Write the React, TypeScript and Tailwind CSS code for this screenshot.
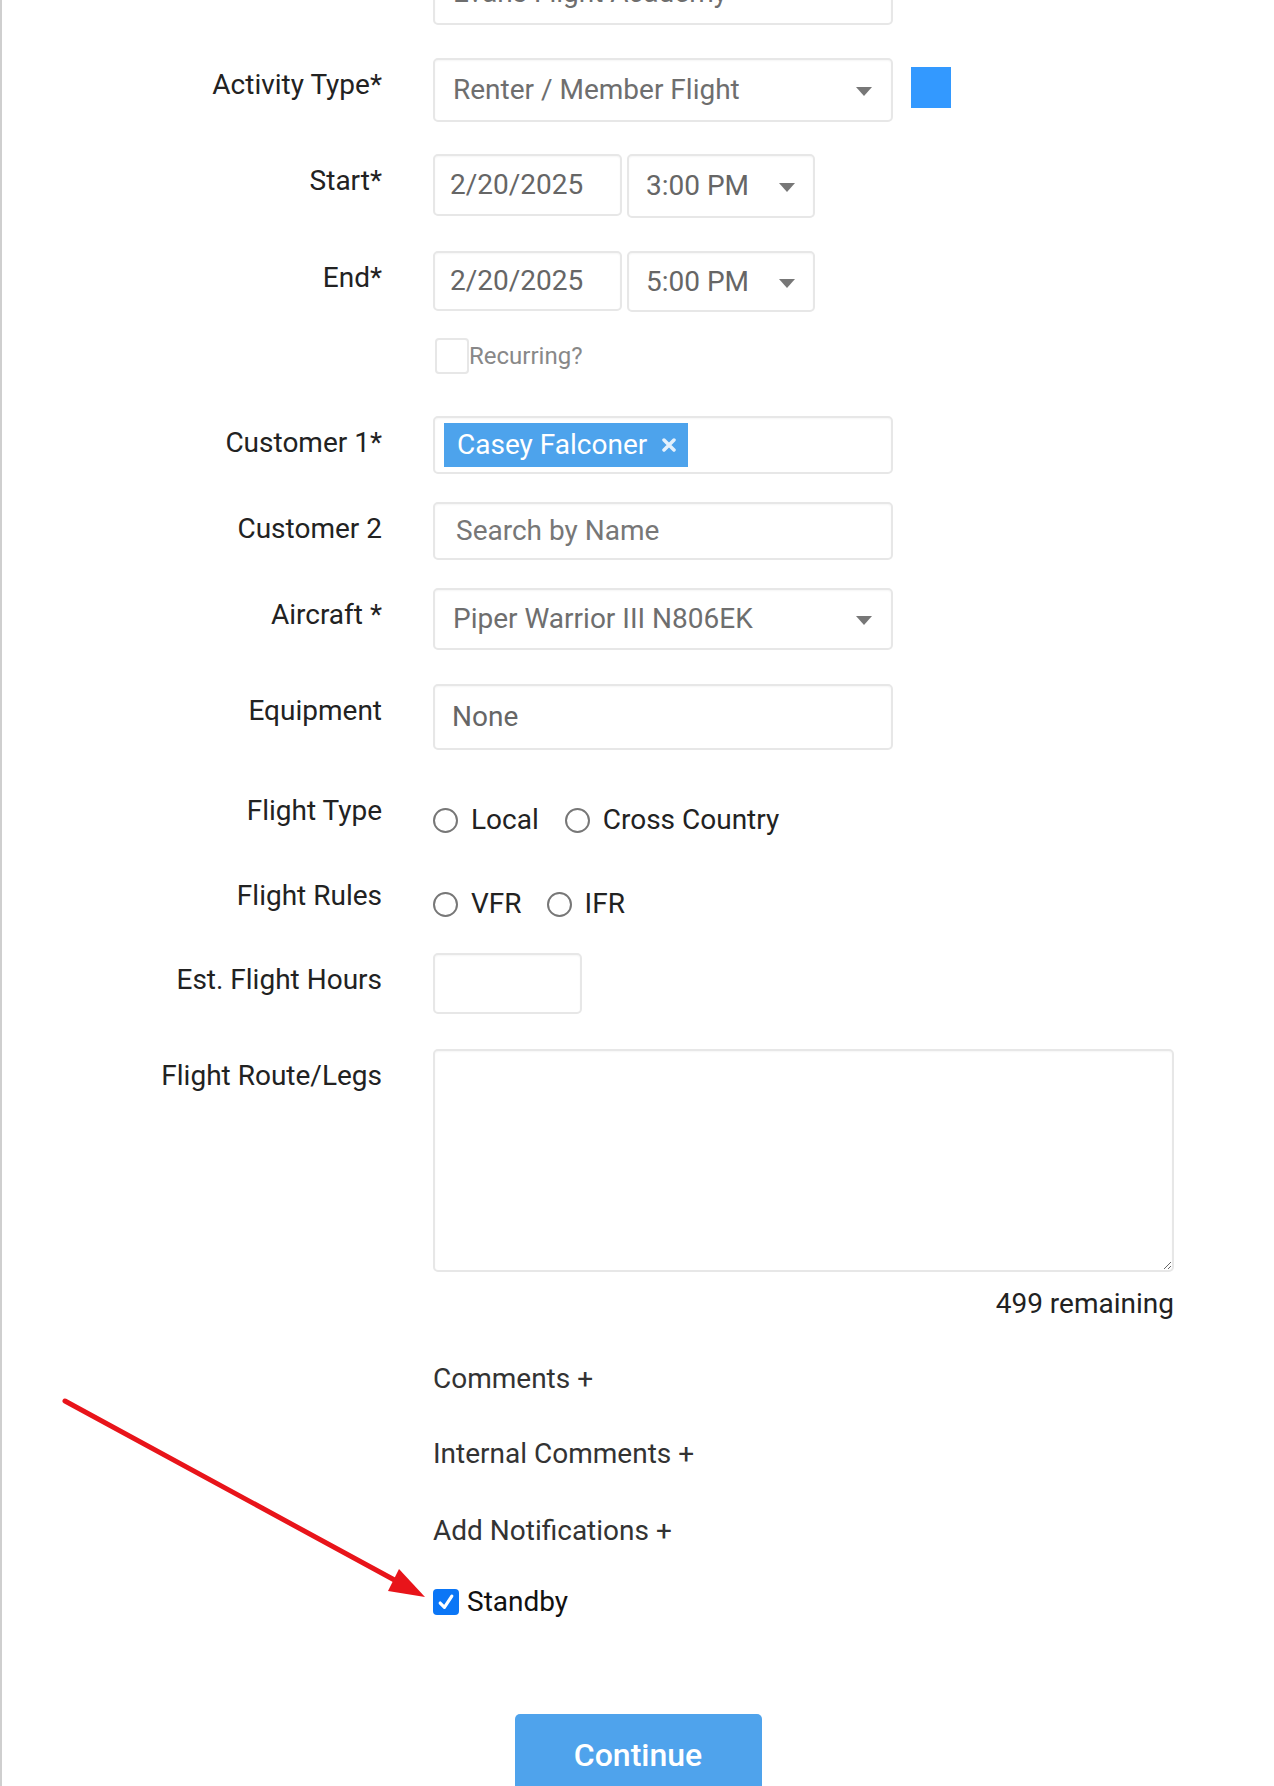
import React from "react";

const LABEL =
  "w-[380px] shrink-0 text-right text-[28px] leading-[38px] text-[#222] pt-[8px]";
const BOX =
  "border-2 border-[#e7e7e7] rounded-[5px] bg-white shadow-[inset_0_1px_2px_rgba(0,0,0,0.04)] flex items-center";

function Caret() {
  return (
    <svg width="16" height="9" viewBox="0 0 16 9" className="shrink-0 mt-[3px]">
      <path d="M0 0H16L8 9Z" fill="#777" />
    </svg>
  );
}

function Row({
  label,
  children,
  className = "",
  labelClass = LABEL,
}: {
  label?: string;
  children: React.ReactNode;
  className?: string;
  labelClass?: string;
}) {
  return (
    <div className={"flex items-start " + className}>
      <div className={labelClass}>{label}</div>
      <div className="ml-[51px] flex-1">{children}</div>
    </div>
  );
}

function Radio({ label }: { label: string }) {
  return (
    <span className="flex items-center">
      <span className="w-[25px] h-[25px] rounded-full border-2 border-[#777] bg-white shrink-0" />
      <span className="ml-[13px] text-[28px] leading-[38px] text-[#222]">{label}</span>
    </span>
  );
}

function Link({ text, className }: { text: string; className: string }) {
  return (
    <div className={"pl-[431px] text-[28px] leading-[38px] text-[#333] " + className}>{text}</div>
  );
}

export default function App() {
  return (
    <div className="relative w-full h-[1786px] overflow-hidden bg-white border-l-2 border-[#cfcfcf] font-['Roboto',_'Liberation_Sans',_sans-serif]">
      <div className="flex flex-col">
        {/* Location (cut off) */}
        <Row className="mt-[-39px]">
          <div className={BOX + " w-[460px] h-[64px] pl-[18px] pr-[19px] justify-between"}>
            <span className="text-[28px] text-[#6e6e6e]">Evans Flight Academy</span>
            <Caret />
          </div>
        </Row>

        {/* Activity Type */}
        <Row label="Activity Type*" className="mt-[33px]">
          <div className="flex items-start">
            <div className={BOX + " w-[460px] h-[64px] pl-[18px] pr-[19px] justify-between"}>
              <span className="text-[28px] text-[#6e6e6e]">Renter / Member Flight</span>
              <Caret />
            </div>
            <div className="ml-[18px] mt-[9px] w-[40px] h-[41px] bg-[#3399ff]" />
          </div>
        </Row>

        {/* Start */}
        <Row label="Start*" className="mt-[32px]">
          <div className="flex items-start gap-[5px]">
            <div className={BOX + " w-[189px] h-[62px] pl-[15px]"}>
              <span className="text-[28px] text-[#666]">2/20/2025</span>
            </div>
            <div className={BOX + " w-[188px] h-[64px] pl-[17px] pr-[18px] justify-between"}>
              <span className="text-[28px] text-[#666]">3:00 PM</span>
              <Caret />
            </div>
          </div>
        </Row>

        {/* End */}
        <Row label="End*" className="mt-[33px]">
          <div className="flex items-start gap-[5px]">
            <div className={BOX + " w-[189px] h-[60px] pl-[15px]"}>
              <span className="text-[28px] text-[#666]">2/20/2025</span>
            </div>
            <div className={BOX + " w-[188px] h-[61px] pl-[17px] pr-[18px] justify-between"}>
              <span className="text-[28px] text-[#666]">5:00 PM</span>
              <Caret />
            </div>
          </div>
        </Row>

        {/* Recurring */}
        <Row className="mt-[26px]" labelClass="w-[380px] shrink-0">
          <div className="flex items-center ml-[2px]">
            <span className="w-[34px] h-[36px] border-2 border-[#e7e7e7] rounded-[4px] bg-white" />
            <span className="text-[24px] text-[#888] leading-[36px]">Recurring?</span>
          </div>
        </Row>

        {/* Customer 1 */}
        <Row label="Customer 1*" className="mt-[42px]">
          <div className={BOX + " w-[460px] h-[58px] pl-[9px]"}>
            <span className="flex items-center h-[44px] bg-[#4da3ec] pl-[13px] pr-[12px]">
              <span className="text-[28px] text-white">Casey Falconer</span>
              <svg width="14" height="14" viewBox="0 0 14 14" className="ml-[15px]">
                <path d="M2 2L12 12M12 2L2 12" stroke="#ffffff" strokeOpacity="0.85" strokeWidth="3.5" strokeLinecap="round" />
              </svg>
            </span>
          </div>
        </Row>

        {/* Customer 2 */}
        <Row label="Customer 2" className="mt-[28px]">
          <div className={BOX + " w-[460px] h-[58px] pl-[21px]"}>
            <span className="text-[28px] text-[#777]">Search by Name</span>
          </div>
        </Row>

        {/* Aircraft */}
        <Row label="Aircraft *" className="mt-[28px]">
          <div className={BOX + " w-[460px] h-[62px] pl-[18px] pr-[19px] justify-between"}>
            <span className="text-[28px] text-[#6e6e6e]">Piper Warrior III N806EK</span>
            <Caret />
          </div>
        </Row>

        {/* Equipment */}
        <Row label="Equipment" className="mt-[34px]">
          <div className={BOX + " w-[460px] h-[66px] pl-[17px]"}>
            <span className="text-[28px] text-[#666]">None</span>
          </div>
        </Row>

        {/* Flight Type */}
        <Row
          label="Flight Type"
          className="mt-[42px]"
          labelClass="w-[380px] shrink-0 text-right text-[28px] leading-[38px] text-[#222]"
        >
          <div className="flex items-center pt-[9px] gap-[26px]">
            <Radio label="Local" />
            <Radio label="Cross Country" />
          </div>
        </Row>

        {/* Flight Rules */}
        <Row
          label="Flight Rules"
          className="mt-[38px]"
          labelClass="w-[380px] shrink-0 text-right text-[28px] leading-[38px] text-[#222]"
        >
          <div className="flex items-center pt-[8px] gap-[25px]">
            <Radio label="VFR" />
            <Radio label="IFR" />
          </div>
        </Row>

        {/* Est. Flight Hours */}
        <Row label="Est. Flight Hours" className="mt-[30px]">
          <div className={BOX + " w-[149px] h-[61px]"} />
        </Row>

        {/* Flight Route */}
        <Row label="Flight Route/Legs" className="mt-[35px]">
          <textarea
            readOnly
            className="block w-[741px] h-[223px] border-2 border-[#e7e7e7] rounded-[5px] bg-white shadow-[inset_0_1px_2px_rgba(0,0,0,0.04)] resize outline-none"
          />
        </Row>

        <div className="w-[1172px] text-right text-[28px] leading-[38px] text-[#222] mt-[13px]">
          499 remaining
        </div>

        <Link text="Comments +" className="mt-[37px]" />
        <Link text="Internal Comments +" className="mt-[37px]" />
        <Link text="Add Notifications +" className="mt-[39px]" />

        <div className="pl-[431px] mt-[33px] flex items-center">
          <span className="w-[26px] h-[26px] rounded-[4px] bg-[#0b76f6] flex items-center justify-center">
            <svg width="18" height="18" viewBox="0 0 17 17">
              <path d="M3 9.5L7 13.5L14 3" fill="none" stroke="#fff" strokeWidth="3" strokeLinecap="round" strokeLinejoin="round" />
            </svg>
          </span>
          <span className="ml-[8px] text-[28px] leading-[38px] text-[#111]">Standby</span>
        </div>

        <div className="mt-[93px] mx-auto w-[247px] h-[84px] bg-[#4fa3ec] rounded-t-[5px] flex items-start justify-center pt-[21px]">
          <span className="text-white text-[32px] leading-[40px] font-medium">Continue</span>
        </div>
      </div>

      {/* Red annotation arrow */}
      <svg
        className="absolute left-0 top-0 pointer-events-none"
        width="1274"
        height="1786"
        viewBox="0 0 1274 1786"
      >
        <line x1="63" y1="1401" x2="398" y2="1583" stroke="#e8141a" strokeWidth="5" strokeLinecap="round" />
        <polygon points="423,1597 397,1569 386,1591" fill="#e8141a" />
      </svg>
    </div>
  );
}
